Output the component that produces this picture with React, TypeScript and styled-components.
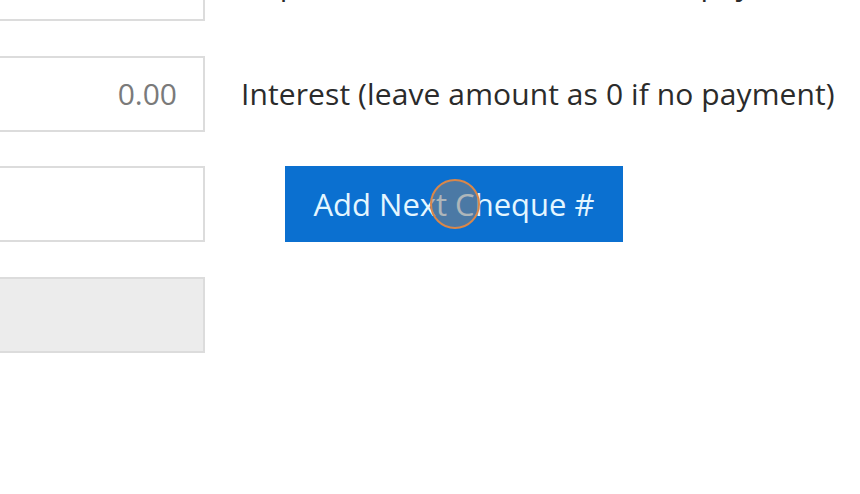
import React, { FC } from "react";
import styled, { createGlobalStyle } from "styled-components";

const GlobalStyle = createGlobalStyle`
  html, body {
    margin: 0;
    padding: 0;
    background: #fff;
    overflow: hidden;
  }
  body {
    font-family: "Open Sans", "Noto Sans", sans-serif;
  }
`;

type Row = {
  value?: string;
  label?: string;
  disabled?: boolean;
  action?: string;
};

const rows: Row[] = [
  { value: "0.00", label: "Deposit (leave amount as 0 if no payment)" },
  { value: "0.00", label: "Interest (leave amount as 0 if no payment)" },
  { action: "Add Next Cheque #" },
  { disabled: true },
];

const App: FC = () => {
  return (
    <>
      <GlobalStyle />
      <Page>
        <Form>
          {rows.map((row, i) => (
            <React.Fragment key={i}>
              <AmountBox $disabled={row.disabled}>{row.value}</AmountBox>
              <Side>
                {row.label && <Label>{row.label}</Label>}
                {row.action && (
                  <ActionButton>
                    {row.action}
                    <Cursor />
                  </ActionButton>
                )}
              </Side>
            </React.Fragment>
          ))}
        </Form>
      </Page>
    </>
  );
};

export default App;

const Page = styled.div`
  width: 860px;
  height: 494px;
  overflow: hidden;
`;

const Form = styled.div`
  display: grid;
  grid-template-columns: 301px 1fr;
  grid-auto-rows: 76px;
  row-gap: 34.5px;
  column-gap: 36px;
  margin-top: -55px;
  margin-left: -96px;
`;

const AmountBox = styled.div<{ $disabled?: boolean }>`
  box-sizing: border-box;
  height: 76px;
  border: 2px solid #dcdcdc;
  background: ${(p) => (p.$disabled ? "#ececec" : "#fff")};
  display: flex;
  align-items: center;
  justify-content: flex-end;
  padding-right: 26px;
  font-size: 30px;
  color: #7a7a7a;
`;

const Side = styled.div`
  display: flex;
  align-items: center;
`;

const Label = styled.div`
  font-size: 30px;
  color: #2b2b2b;
  white-space: nowrap;
  letter-spacing: 0.1px;
`;

const ActionButton = styled.button`
  position: relative;
  box-sizing: border-box;
  margin-left: 44px;
  width: 338px;
  height: 76px;
  border: none;
  background: #0b70d0;
  color: #e4f6ff;
  font-family: "Open Sans", "Noto Sans", sans-serif;
  font-size: 31px;
  padding: 0;
  cursor: pointer;
`;

const Cursor = styled.span`
  position: absolute;
  left: 145px;
  top: 13px;
  width: 50px;
  height: 50px;
  box-sizing: border-box;
  border-radius: 50%;
  border: 2px solid #d9874a;
  background: rgba(130, 130, 130, 0.55);
`;
